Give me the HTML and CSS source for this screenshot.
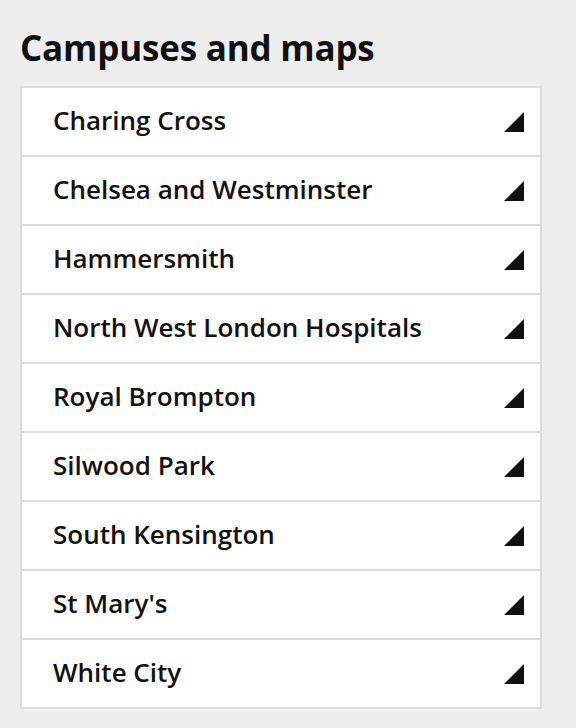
FILE: index.html
```html
<!DOCTYPE html>
<html>
<head>
    <title>Campuses and maps</title>
    <link rel="stylesheet" href="styles.css">
</head>
<body>
    <div class="container">
        <h2>Campuses and maps</h2>
        <ul class="campus-list">
            <li><span>Charing Cross</span><i class="arrow"></i></li>
            <li><span>Chelsea and Westminster</span><i class="arrow"></i></li>
            <li><span>Hammersmith</span><i class="arrow"></i></li>
            <li><span>North West London Hospitals</span><i class="arrow"></i></li>
            <li><span>Royal Brompton</span><i class="arrow"></i></li>
            <li><span>Silwood Park</span><i class="arrow"></i></li>
            <li><span>South Kensington</span><i class="arrow"></i></li>
            <li><span>St Mary's</span><i class="arrow"></i></li>
            <li><span>White City</span><i class="arrow"></i></li>
        </ul>
    </div>
</body>
</html>
```
FILE: styles.css
```css
body {
    font-family: "Open Sans", sans-serif;
    margin: 0;
    padding: 0;
    background: #eeeeef;
    color: #111;
}
.container {
    padding: 26px 34px 0 20px;
}
h2 {
    font-size: 35px;
    font-weight: 700;
    margin: 0 0 17px 0;
    line-height: 43px;
    letter-spacing: -0.2px;
}
.campus-list {
    list-style: none;
    margin: 0;
    padding: 0;
    background: #fff;
    border: 2px solid #dcdcdc;
}
.campus-list li {
    display: flex;
    align-items: center;
    justify-content: space-between;
    height: 63px;
    padding: 0 16px 4px 31px;
    font-size: 26px;
    font-weight: 600;
    border-top: 2px solid #dcdcdc;
}
.campus-list li:first-child {
    border-top: none;
}
.arrow {
    width: 0;
    height: 0;
    margin-top: 4px;
    border-left: 20px solid transparent;
    border-bottom: 20px solid #111;
}
```
